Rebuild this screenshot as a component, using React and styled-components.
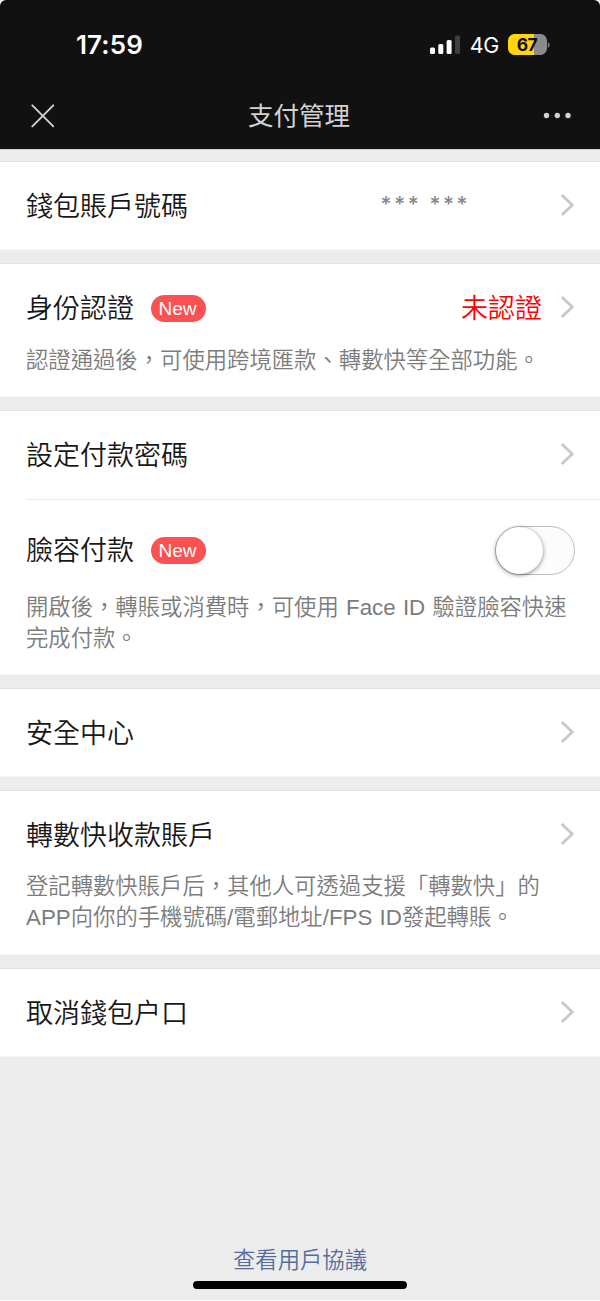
import React from "react";
import styled, { createGlobalStyle } from "styled-components";

const Global = createGlobalStyle`
  *, *::before, *::after { box-sizing: border-box; }
  body { margin: 0; background: #fff; }
`;

const Screen = styled.div`
  width: 600px;
  height: 1300px;
  display: flex;
  flex-direction: column;
  overflow: hidden;
  background: #ececec;
  font-family: "Liberation Sans", "Noto Sans CJK TC", sans-serif;
  font-weight: 350;
  color: #181818;
`;

const Header = styled.header`
  height: 149px;
  flex: none;
  background: #111;
  border-radius: 6px 6px 0 0;
`;

const HeaderBackdrop = styled.div`
  background: #fff;
  border-bottom: 1px solid #d2d2d2;
`;

const StatusBar = styled.div`
  height: 83px;
  padding: 6px 50px 0 76px;
  display: flex;
  align-items: center;
  justify-content: space-between;
  color: #fff;
`;

const Clock = styled.span`
  font: 600 26px/32px Inter, sans-serif;
  letter-spacing: 0.1px;
`;

const StatusIcons = styled.div`
  display: flex;
  align-items: center;
`;

const Network = styled.span`
  margin: 0 9px 0 10px;
  font: 400 21.5px/26px Inter, sans-serif;
  letter-spacing: -0.3px;
`;

const Battery = styled.div`
  width: 39px;
  height: 21px;
  border-radius: 6.5px;
  background: linear-gradient(90deg, #ffd60a 67%, #8b8b8b 67%);
  color: #111;
  font: 700 17.5px/21px Inter, sans-serif;
  letter-spacing: -0.5px;
  padding-right: 1px;
  text-align: center;
`;

const NavBar = styled.nav`
  height: 66px;
  padding: 0 28px 0 30px;
  display: grid;
  grid-template-columns: 60px 1fr 64px;
  align-items: center;
  color: #d2d2d2;

  & > :last-child { justify-self: end; }
`;

const NavTitle = styled.h1`
  margin: 0;
  text-align: center;
  font-size: 25.5px;
  line-height: 36px;
  font-weight: 400;
`;

const List = styled.main`
  display: flex;
  flex-direction: column;
  gap: 13px;
  padding-top: 11px;
`;

const Section = styled.section`
  border-top: 1px solid #e3e3e3;
  border-bottom: 1px solid #f7f7f7;
  background: #fff;
`;

const Cell = styled.div`
  height: ${(p) => p.$height}px;
  margin-left: 26px;
  padding-right: 26px;
  border-top: ${(p) => (p.$divided ? "1px solid #ebebeb" : "none")};
`;

const CellHead = styled.div`
  height: ${(p) => (p.$tall ? 101 : 86)}px;
  display: flex;
  align-items: center;
`;

const CellTitle = styled.h2`
  margin: 0;
  padding-top: ${(p) => (p.$tall ? 0 : 4)}px;
  font-size: 27px;
  line-height: 38px;
  font-weight: inherit;
`;

const Badge = styled.span`
  width: 55px;
  height: 27px;
  margin: ${(p) => (p.$tall ? -1 : 3)}px 0 0 17px;
  padding-right: 2px;
  border-radius: 14px;
  background: #fb5152;
  color: #fff;
  font: 400 19px/27px "Liberation Sans", sans-serif;
  text-align: center;
`;

const CellEnd = styled.div`
  margin-left: auto;
  display: flex;
  align-items: center;
`;

const Value = styled.span`
  margin-right: 18px;
  padding-top: 4px;
  color: #f00;
  font-size: 27px;
  line-height: 38px;
`;

const Mask = styled.span`
  margin-right: 90px;
  color: #888;
  font: 500 21px/30px Inter, sans-serif;
  letter-spacing: 2.6px;
  white-space: pre;
`;

const Note = styled.p`
  margin: ${(p) => p.$offset}px -10px 0 0;
  color: #7c7c7c;
  font-size: 22.35px;
  line-height: 30.5px;
  word-spacing: 1px;
`;

const Toggle = styled.button`
  width: 80px;
  height: 49px;
  margin-right: -1px;
  padding: 0;
  display: flex;
  border: 1px solid #bdbdbd;
  border-radius: 25px;
  background: #fcfcfc;
`;

const Knob = styled.span`
  width: 47px;
  height: 47px;
  border-radius: 50%;
  background: #fff;
  box-shadow: 0 1px 4px rgba(0, 0, 0, 0.5);
`;

const Footer = styled.footer`
  margin-top: auto;
  padding-bottom: 11px;
  display: flex;
  flex-direction: column;
  align-items: center;
`;

const Agreement = styled.a`
  color: #586c9c;
  font-size: 22.35px;
  line-height: 32px;
`;

const HomeIndicator = styled.div`
  width: 214px;
  height: 8px;
  margin-top: 4px;
  border-radius: 4px;
  background: #000;
`;

const Signal = () => (
  <svg width="30" height="20" viewBox="0 0 30 20" fill="#fff">
    <rect x="0" y="12.5" width="5" height="6.5" rx="1.5" />
    <rect x="8.3" y="9" width="5" height="10" rx="1.5" />
    <rect x="16.6" y="5" width="5" height="14" rx="1.5" />
    <rect x="25" y="0.5" width="5" height="18.5" rx="1.5" fill="#3f3f3f" />
  </svg>
);

const BatteryTip = () => (
  <svg width="3" height="8" viewBox="0 0 3 8">
    <path d="M0.8 1Q2.8 2 2.8 4T0.8 7Z" fill="#777" />
  </svg>
);

const Close = () => (
  <svg width="26" height="26" viewBox="0 0 26 26">
    <path d="M2.3 2.3L23.3 23.3M23.3 2.3L2.3 23.3" stroke="#d2d2d2" strokeWidth="1.9" strokeLinecap="round" />
  </svg>
);

const More = () => (
  <svg width="30" height="8" viewBox="0 0 30 8" fill="#d2d2d2">
    <circle cx="4.5" cy="3.5" r="2.7" />
    <circle cx="15.3" cy="3.5" r="2.7" />
    <circle cx="26" cy="3.5" r="2.7" />
  </svg>
);

const Chevron = () => (
  <svg width="14" height="24" viewBox="0 0 14 24">
    <path d="M1.8 2L12.2 12L1.8 22" fill="none" stroke="#c7c7cc" strokeWidth="2.8" />
  </svg>
);

export default function App() {
  return (
    <Screen>
      <Global />
      <HeaderBackdrop>
        <Header>
          <StatusBar>
            <Clock>17:59</Clock>
            <StatusIcons>
              <Signal />
              <Network>4G</Network>
              <Battery>67</Battery>
              <BatteryTip />
            </StatusIcons>
          </StatusBar>
          <NavBar>
            <Close />
            <NavTitle>支付管理</NavTitle>
            <More />
          </NavBar>
        </Header>
      </HeaderBackdrop>
      <List>
        <Section>
          <Cell $height={87}>
            <CellHead>
              <CellTitle>錢包賬戶號碼</CellTitle>
              <CellEnd>
                <Mask>*** ***</Mask>
                <Chevron />
              </CellEnd>
            </CellHead>
          </Cell>
        </Section>
        <Section>
          <Cell $height={132}>
            <CellHead>
              <CellTitle>身份認證</CellTitle>
              <Badge>New</Badge>
              <CellEnd>
                <Value>未認證</Value>
                <Chevron />
              </CellEnd>
            </CellHead>
            <Note $offset={-4}>認證通過後，可使用跨境匯款、轉數快等全部功能。</Note>
          </Cell>
        </Section>
        <Section>
          <Cell $height={88}>
            <CellHead>
              <CellTitle>設定付款密碼</CellTitle>
              <CellEnd>
                <Chevron />
              </CellEnd>
            </CellHead>
          </Cell>
          <Cell $height={175} $divided>
            <CellHead $tall>
              <CellTitle $tall>臉容付款</CellTitle>
              <Badge $tall>New</Badge>
              <CellEnd>
                <Toggle role="switch" aria-checked="false" aria-label="臉容付款">
                  <Knob />
                </Toggle>
              </CellEnd>
            </CellHead>
            <Note $offset={-8}>
              開啟後，轉賬或消費時，可使用 Face ID 驗證臉容快速
              <br />
              完成付款。
            </Note>
          </Cell>
        </Section>
        <Section>
          <Cell $height={87}>
            <CellHead>
              <CellTitle>安全中心</CellTitle>
              <CellEnd>
                <Chevron />
              </CellEnd>
            </CellHead>
          </Cell>
        </Section>
        <Section>
          <Cell $height={163}>
            <CellHead>
              <CellTitle>轉數快收款賬戶</CellTitle>
              <CellEnd>
                <Chevron />
              </CellEnd>
            </CellHead>
            <Note $offset={-5}>
              登記轉數快賬戶后，其他人可透過支援「轉數快」的
              <br />
              APP向你的手機號碼/電郵地址/FPS ID發起轉賬。
            </Note>
          </Cell>
        </Section>
        <Section>
          <Cell $height={87}>
            <CellHead>
              <CellTitle>取消錢包户口</CellTitle>
              <CellEnd>
                <Chevron />
              </CellEnd>
            </CellHead>
          </Cell>
        </Section>
      </List>
      <Footer>
        <Agreement>查看用戶協議</Agreement>
        <HomeIndicator />
      </Footer>
    </Screen>
  );
}
